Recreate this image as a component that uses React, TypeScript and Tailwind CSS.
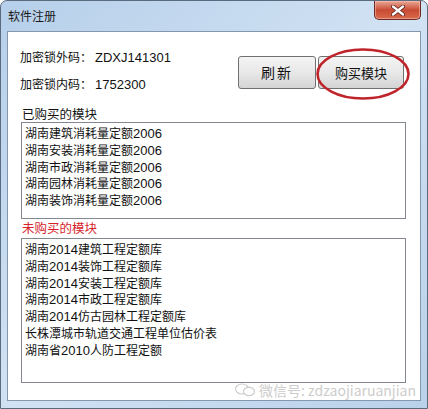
const font = { fontFamily: '"Noto Sans CJK SC", "Liberation Sans", sans-serif' };
const latin = { fontFamily: '"Liberation Sans", sans-serif' };

const bought = [
  '湖南建筑消耗量定额2006',
  '湖南安装消耗量定额2006',
  '湖南市政消耗量定额2006',
  '湖南园林消耗量定额2006',
  '湖南装饰消耗量定额2006',
];

const notBought = [
  '湖南2014建筑工程定额库',
  '湖南2014装饰工程定额库',
  '湖南2014安装工程定额库',
  '湖南2014市政工程定额库',
  '湖南2014仿古园林工程定额库',
  '长株潭城市轨道交通工程单位估价表',
  '湖南省2010人防工程定额',
];

// Latin runs are a touch wider than the CJK font's own digits
function Mixed({ text }: { text: string }) {
  const parts = text.split(/([\x00-\x7F]+)/).filter(Boolean);
  return (
    <>
      {parts.map((p, i) =>
        /^[\x00-\x7F]+$/.test(p) ? (
          <span key={i} className="text-[13px] leading-none" style={latin}>
            {p}
          </span>
        ) : (
          <span key={i}>{p}</span>
        ),
      )}
    </>
  );
}

function CloseButton() {
  return (
    <div className="mr-[6px] flex h-[19px] w-[47px] items-center justify-center rounded-b-[5px] border border-t-0 border-[#6b2b22] bg-gradient-to-b from-[#e9a898] via-[#c84a33] to-[#d66a4c] shadow-[inset_0_0_0_1px_rgba(255,200,190,0.5)]">
      <svg width="14" height="11" viewBox="0 0 14 11">
        <path d="M2 1.5 L12 9.5 M12 1.5 L2 9.5" stroke="#5a2018" strokeWidth="4" strokeLinecap="round" />
        <path d="M2 1.5 L12 9.5 M12 1.5 L2 9.5" stroke="#ffffff" strokeWidth="2.4" strokeLinecap="round" />
      </svg>
    </div>
  );
}

function Button({ label, className }: { label: string; className?: string }) {
  return (
    <div
      className={`flex h-[33px] items-center justify-center rounded-[3px] border border-[#707070] bg-gradient-to-b from-[#f4f4f4] via-[#e8e8e8] to-[#d4d4d4] text-[13px] text-[#111] ${className ?? ''}`}
    >
      {label}
    </div>
  );
}

function ListBox({ items, height }: { items: string[]; height: string }) {
  return (
    <div className={`${height} border border-[#828790] bg-white px-[3px] pt-[2px] text-[12px] leading-[16.75px] text-[#111]`}>
      {items.map((t) => (
        <div key={t} className="h-[16.75px] whitespace-nowrap">
          <Mixed text={t} />
        </div>
      ))}
    </div>
  );
}

export default function App() {
  return (
    <div
      className="relative h-[409px] w-[428px] overflow-hidden rounded-t-[7px] border border-[#5b6b7e] bg-gradient-to-br from-[#b6cfea] via-[#d1e2f3] to-[#b9d1ea]"
      style={font}
    >
      {/* Title bar */}
      <div className="flex h-[30px] items-start justify-between">
        <div className="pl-[7px] pt-[6px] text-[12px] leading-[18px] text-[#1b1b1b]">软件注册</div>
        <CloseButton />
      </div>

      {/* Client area */}
      <div className="relative mx-[6px] h-[370px] border border-[#8497ad] bg-white">
        <div className="flex h-[74px] justify-between">
          <div className="flex flex-col gap-[7px] pl-[12px] pt-[15px] text-[12px] leading-[20px] text-[#111]">
            <div className="h-[20px]">
              加密锁外码<span className="mr-[3px]">：</span>
              <Mixed text="ZDXJ141301" />
            </div>
            <div className="h-[20px]">
              加密锁内码<span className="mr-[3px]">：</span>
              <Mixed text="1752300" />
            </div>
          </div>
          <div className="flex gap-[2px] pr-[16px] pt-[24px]">
            <Button label="刷新" className="w-[78px] text-[14px] tracking-[2px]" />
            <Button label="购买模块" className="w-[86px]" />
          </div>
        </div>

        <div className="ml-[13px] mr-[14px]">
          <div className="h-[16px] pl-[1px] text-[12.5px] leading-[16px] text-[#111]">已购买的模块</div>
          <ListBox items={bought} height="h-[97px]" />
          <div className="mt-[1px] h-[16px] pl-[1px] text-[12.5px] leading-[16px] text-[#d8232a]">未购买的模块</div>
          <div className="mt-[2px]">
            <ListBox items={notBought} height="h-[145px]" />
          </div>
        </div>

        {/* Watermark */}
        <div className="absolute bottom-[2px] right-[4px] flex items-center gap-[3px] text-[14px] leading-[16px] text-[#cdcdcd]">
          <svg width="22" height="14" viewBox="0 0 22 14" fill="none" stroke="#cdcdcd" strokeWidth="1.2">
            <ellipse cx="8" cy="6" rx="6.5" ry="5" />
            <ellipse cx="15" cy="8.5" rx="5.5" ry="4.2" fill="white" />
          </svg>
          <span>微信号: zdzaojiaruanjian</span>
        </div>
      </div>

      {/* Red annotation ellipse */}
      <svg className="absolute left-[314px] top-[46px]" width="96" height="54" viewBox="0 0 96 54">
        <ellipse cx="48" cy="27" rx="45.5" ry="24.5" fill="none" stroke="#c0242b" strokeWidth="2.6" />
      </svg>
    </div>
  );
}
